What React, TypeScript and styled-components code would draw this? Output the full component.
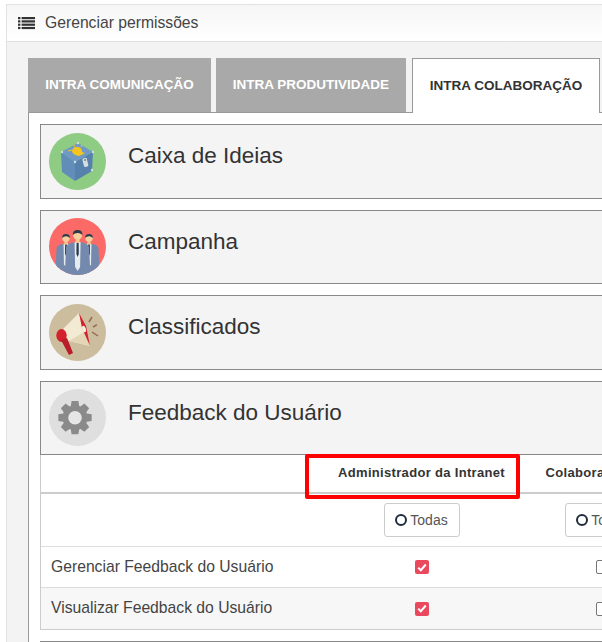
import React from 'react'
import { createGlobalStyle, styled } from 'styled-components'

const Global = createGlobalStyle`
  html, body {
    margin: 0;
    padding: 0;
    background: #fff;
    overflow: hidden;
  }
  body {
    font-family: "Liberation Sans", Arial, sans-serif;
    color: #333;
  }
  #root {
    width: 602px;
    height: 642px;
    overflow: hidden;
  }
  * {
    box-sizing: border-box;
  }
`

const Page = styled.div`
  width: 602px;
  height: 642px;
  padding: 4px 0 0 6px;
  overflow: hidden;
`
const Card = styled.section`
  width: 760px;
  height: 700px;
  background: #f3f3f3;
  border: 1px solid #e2e2e2;
  border-right: 0;
`
const CardHeader = styled.header`
  height: 37px;
  display: flex;
  align-items: center;
  gap: 10px;
  padding-left: 11px;
  background: linear-gradient(#f6f6f6, #fff);
  border-bottom: 1px solid #e0e0e0;
  font-size: 15.7px;
  color: #444;
`
const CardBody = styled.div`
  padding: 16px 0 0 21px;
`
const Tabs = styled.nav`
  display: flex;
  height: 55px;
`
const Tab = styled.div<{ $active?: boolean; $w: number; $gap: number }>`
  width: ${({ $w }) => $w}px;
  margin-right: ${({ $gap }) => $gap}px;
  height: ${({ $active }) => ($active ? 55 : 54)}px;
  padding-bottom: 1px;
  display: flex;
  align-items: center;
  justify-content: center;
  font-size: 13.5px;
  font-weight: 700;
  text-transform: uppercase;
  white-space: nowrap;
  position: relative;
  z-index: 1;
  background: ${({ $active }) => ($active ? '#fff' : '#a9a9a9')};
  color: ${({ $active }) => ($active ? '#333' : '#fff')};
  border: ${({ $active }) => ($active ? '1px solid #999' : '0')};
  border-bottom: 0;
`
const Panel = styled.div`
  margin-top: -1px;
  width: 700px;
  padding: 11px;
  background: #fff;
  border: 1px solid #999;
  border-right: 0;
  display: flex;
  flex-direction: column;
  gap: 11px;
`
const Section = styled.article`
  display: flex;
  flex-direction: column;
`
const SectionHead = styled.div`
  height: 74.5px;
  display: flex;
  align-items: center;
  gap: 22px;
  padding: 0 0 10px 8px;
  background: #f4f4f4;
  border: 1px solid #888;
  font-size: 22.5px;
  color: #333;
`
const Badge = styled.div<{ $bg: string }>`
  width: 57px;
  height: 57px;
  flex: none;
  margin-top: 10px;
  border-radius: 50%;
  overflow: hidden;
  background: ${({ $bg }) => $bg};
  svg {
    display: block;
  }
`
const TableWrap = styled.div`
  position: relative;
  background: #fff;
  border-left: 1px solid #ccc;
`
const Grid = styled.table`
  width: 652px;
  table-layout: fixed;
  border-collapse: separate;
  border-spacing: 0;
`
const HeadCell = styled.th<{ $shift?: number }>`
  height: 39px;
  padding: 0 ${({ $shift }) => $shift ?? 0}px 2px 0;
  font-size: 13px;
  font-weight: 700;
  letter-spacing: 0.32px;
  text-align: center;
  white-space: nowrap;
  color: #333;
  border-bottom: 2px solid #ccc;
`
const FilterCell = styled.td`
  height: 53px;
  padding: 0;
  text-align: center;
  border-bottom: 1px solid #ddd;
`
const Row = styled.tr<{ $alt?: boolean }>`
  background: ${({ $alt }) => ($alt ? '#f7f7f7' : '#fff')};
`
const LabelCell = styled.td<{ $alt?: boolean }>`
  height: ${({ $alt }) => ($alt ? 42 : 41)}px;
  padding: 0 0 1px 10px;
  font-size: 15.7px;
  color: #444;
  white-space: nowrap;
  border-bottom: 1px solid ${({ $alt }) => ($alt ? '#ccc' : '#ddd')};
`
const CheckCell = styled.td<{ $alt?: boolean }>`
  padding: 0 0 1px;
  text-align: center;
  border-bottom: 1px solid ${({ $alt }) => ($alt ? '#ccc' : '#ddd')};
`
const TodasButton = styled.button`
  width: 76px;
  height: 34px;
  display: inline-flex;
  align-items: center;
  justify-content: center;
  gap: 3px;
  padding: 0;
  vertical-align: middle;
  background: #fff;
  border: 1px solid #ccc;
  border-radius: 3px;
  font: 14px "Liberation Sans", Arial, sans-serif;
  color: #555;
`
const Ring = styled.span`
  width: 12px;
  height: 12px;
  border: 2px solid #1f2d3d;
  border-radius: 50%;
`
const Check = styled.span<{ $on?: boolean }>`
  width: 14px;
  height: 14px;
  display: inline-flex;
  align-items: center;
  justify-content: center;
  vertical-align: middle;
  border-radius: 2px;
  background: ${({ $on }) => ($on ? '#e9485d' : '#fff')};
  border: ${({ $on }) => ($on ? '0' : '1px solid #777')};
`
const Highlight = styled.div`
  position: absolute;
  left: 264px;
  top: -1px;
  width: 215px;
  height: 45px;
  border: 4px solid #f00;
  border-radius: 2px;
  pointer-events: none;
`

const ListIcon = () => (
  <svg width="17" height="13" viewBox="0 0 17 13" fill="#333">
    {[0, 3.3, 6.6, 9.9].map(y => (
      <g key={y}>
        <rect x="0" y={y} width="2.4" height="2.2" />
        <rect x="3.6" y={y} width="13.4" height="2.2" />
      </g>
    ))}
  </svg>
)

const BoxIcon = () => (
  <svg width="57" height="57" viewBox="0 0 57 57">
    <path d="M12 19 L29 10 L44 19 L26 29 Z" fill="#6f9ac6" />
    <path d="M12 19 L26 29 L26 48 L13 39 Z" fill="#618db9" />
    <path d="M26 29 L44 19 L43 38 L26 48 Z" fill="#5681ad" />
    <path d="M23 19 Q23 14 28 14 Q33 14 33 19 L36 20 L30 23 Q25 22 23 19 Z" fill="#f4c51f" />
    <path d="M19 18 L23 17 M25 12 L26 14 M33 12 L32 14" stroke="#f4c51f" strokeWidth="1" />
    <rect x="34" y="25" width="4.5" height="9" rx="1.5" fill="#d8dde2" transform="rotate(-14 36 29)" />
    <circle cx="36" cy="27" r="0.9" fill="#62707e" />
    <circle cx="13" cy="19" r="1.2" fill="#d6dce2" />
    <circle cx="44" cy="19" r="1.2" fill="#d6dce2" />
    <circle cx="26" cy="29" r="1.2" fill="#d6dce2" />
    <circle cx="29" cy="10" r="1.2" fill="#d6dce2" />
    <circle cx="43" cy="37" r="1.2" fill="#d6dce2" />
  </svg>
)

const Person = ({ x, y, s }: { x: number; y: number; s: number }) => (
  <g transform={`translate(${x} ${y}) scale(${s})`}>
    <path d="M-13 44 L-11.5 12 Q-11 9 -3 7 L3 7 Q11 9 11.5 12 L13 44 Z" fill="#7389ad" />
    <path d="M-3 7 L-2.5 32 L0 36 L2.5 32 L3 7 Z" fill="#e6ebf0" />
    <path d="M-1 7 L1 7 L1.2 19 L0 22 L-1.2 19 Z" fill="#27384f" />
    <rect x="-2" y="3" width="4" height="5" fill="#f3c48e" />
    <circle cx="0" cy="0" r="4.6" fill="#f6cf9f" />
    <path d="M-4.8 0 Q-5 -5 0 -5 Q5 -5 4.8 0 Q2 -2.4 0 -2 Q-3 -2 -4.8 0 Z" fill="#2b3a48" />
  </g>
)

const PeopleIcon = () => (
  <svg width="57" height="57" viewBox="0 0 57 57">
    <Person x={17} y={20} s={0.82} />
    <Person x={40} y={20} s={0.82} />
    <Person x={28.6} y={17} s={1} />
  </svg>
)

const MegaphoneIcon = () => (
  <svg width="57" height="57" viewBox="0 0 57 57">
    <path d="M14 25 L30 9 L41 42 L16 36 Z" fill="#f2ead2" />
    <path d="M20 37 L35 28 L41 42 Z" fill="#e3d6b4" />
    <path d="M30 9 L37 22 L41 42 L33 24 Z" fill="#d3212d" />
    <ellipse cx="35" cy="25" rx="1.8" ry="3.4" fill="#f4eeda" transform="rotate(-16 35 25)" />
    <ellipse cx="12.5" cy="31.5" rx="5.2" ry="6.5" fill="#d3212d" />
    <path d="M12 36 L18 34 L24 49 L20 51 Z" fill="#b81d28" />
    <path d="M40 18 L43 13 M44 23 L48 20.6 M43 28 L49 32" stroke="#9a6a55" strokeWidth="1.5" />
  </svg>
)

const gearPath = (() => {
  const pts: string[] = []
  for (let i = 0; i < 8; i++) {
    const a = (i * Math.PI) / 4 - Math.PI / 2
    const d = 0.2
    const p = (r: number, t: number) => `${(26 + r * Math.cos(t)).toFixed(2)} ${(28.7 + r * Math.sin(t)).toFixed(2)}`
    pts.push(`${i ? 'L' : 'M'}${p(12.5, a - d - 0.14)} L${p(17, a - d)} L${p(17, a + d)} L${p(12.5, a + d + 0.14)}`)
  }
  return pts.join(' ') + ' Z'
})()

const GearIcon = () => (
  <svg width="57" height="57" viewBox="0 0 57 57">
    <path d={gearPath} fill="#8a8a8a" />
    <circle cx="26" cy="28.7" r="6.8" fill="#e6e6e6" />
  </svg>
)

const CheckMark = () => (
  <svg width="10" height="9" viewBox="0 0 10 9">
    <path d="M1.2 4.6 L3.8 7.2 L8.8 1.5" fill="none" stroke="#fff" strokeWidth="2" />
  </svg>
)

const tabs = [
  { label: 'Intra Comunicação', w: 183, gap: 5 },
  { label: 'Intra Produtividade', w: 190, gap: 6 },
  { label: 'Intra Colaboração', w: 188, gap: 0, active: true },
]

const closed = [
  { title: 'Caixa de Ideias', bg: '#8ecb83', icon: <BoxIcon /> },
  { title: 'Campanha', bg: '#fb6a66', icon: <PeopleIcon /> },
  { title: 'Classificados', bg: '#cbbd9d', icon: <MegaphoneIcon /> },
]

const rows = ['Gerenciar Feedback do Usuário', 'Visualizar Feedback do Usuário']

export default function App() {
  return (
    <Page>
      <Global />
      <Card>
        <CardHeader>
          <ListIcon />
          Gerenciar permissões
        </CardHeader>
        <CardBody>
          <Tabs>
            {tabs.map(t => (
              <Tab key={t.label} $w={t.w} $gap={t.gap} $active={t.active}>
                {t.label}
              </Tab>
            ))}
          </Tabs>
          <Panel>
            {closed.map(s => (
              <Section key={s.title}>
                <SectionHead>
                  <Badge $bg={s.bg}>{s.icon}</Badge>
                  {s.title}
                </SectionHead>
              </Section>
            ))}
            <Section>
              <SectionHead>
                <Badge $bg="#dfdfdf">
                  <GearIcon />
                </Badge>
                Feedback do Usuário
              </SectionHead>
              <TableWrap>
                <Grid>
                  <colgroup>
                    <col style={{ width: 290 }} />
                    <col style={{ width: 181 }} />
                    <col style={{ width: 181 }} />
                  </colgroup>
                  <thead>
                    <tr>
                      <HeadCell />
                      <HeadCell>Administrador da Intranet</HeadCell>
                      <HeadCell $shift={33}>Colaborador</HeadCell>
                    </tr>
                  </thead>
                  <tbody>
                    <tr>
                      <FilterCell />
                      <FilterCell>
                        <TodasButton>
                          <Ring />
                          Todas
                        </TodasButton>
                      </FilterCell>
                      <FilterCell>
                        <TodasButton>
                          <Ring />
                          Todas
                        </TodasButton>
                      </FilterCell>
                    </tr>
                    {rows.map((r, i) => (
                      <Row key={r} $alt={i === 1}>
                        <LabelCell $alt={i === 1}>{r}</LabelCell>
                        <CheckCell $alt={i === 1}>
                          <Check $on>
                            <CheckMark />
                          </Check>
                        </CheckCell>
                        <CheckCell $alt={i === 1}>
                          <Check />
                        </CheckCell>
                      </Row>
                    ))}
                  </tbody>
                </Grid>
                <Highlight />
              </TableWrap>
            </Section>
            <Section>
              <SectionHead />
            </Section>
          </Panel>
        </CardBody>
      </Card>
    </Page>
  )
}
